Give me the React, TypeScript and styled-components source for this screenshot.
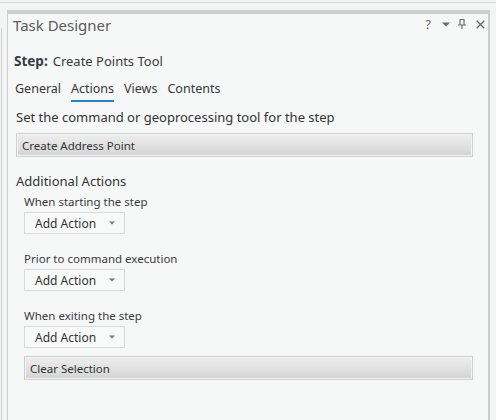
import styled, { createGlobalStyle } from 'styled-components';

const GlobalStyle = createGlobalStyle`
    html, body {
        margin: 0;
        padding: 0;
        background: #f1f2f2;
        font-family: "Noto Sans", "Open Sans", sans-serif;
        color: #3a3a3a;
    }
`

const Page = styled.div`
    width: 496px;
    height: 420px;
    display: flex;
    flex-direction: column;
    overflow: hidden;
    background: #f3f4f4;
`

const DockStrip = styled.div`
    height: 7px;
    margin-top: 2px;
    border-top: 1px solid #d6d6d6;
    flex: none;
`

const DockBody = styled.div`
    flex: 1;
    display: flex;
`

const Gutter = styled.div`
    width: 6px;
    margin-top: 18px;
    box-sizing: border-box;
    border-left: 1px solid #d2d2d2;
    margin-left: 1px;
`

const Panel = styled.div`
    width: 483px;
    box-sizing: border-box;
    border-top: 4px solid #cdcdcd;
    border-left: 1px solid #cfcfcf;
    border-right: 2px solid #cbcbcb;
    background: #f6f8f8;
    display: flex;
    flex-direction: column;
`

const TitleBar = styled.div`
    display: flex;
    align-items: center;
    justify-content: space-between;
    height: 22px;
    padding: 0 3px 0 5px;
`

const Title = styled.div`
    font-size: 15px;
    line-height: 22px;
    color: #5b5b5b;
`

const TitleTools = styled.div`
    display: flex;
    align-items: center;
    gap: 8px;
    color: #6a6a6a;
    margin-top: -2px;

    > svg:first-of-type {
        margin-left: 2px;
    }

    > svg:last-child {
        margin-left: 2px;
    }
`

const HelpGlyph = styled.span`
    font-size: 13px;
    line-height: 14px;
    width: 8px;
    text-align: center;
`

const Content = styled.div`
    padding: 0 15px 0 6px;
    display: flex;
    flex-direction: column;
`

const StepLine = styled.div`
    margin-top: 15px;
    font-size: 13px;
    line-height: 20px;
    color: #3a3a3a;

    b {
        font-size: 13.5px;
        font-weight: 700;
        margin-right: 5px;
    }
`

const Tabs = styled.div`
    display: flex;
    gap: 10px;
    margin-top: 9px;
    padding-left: 1px;
`

const Tab = styled.div<{ $active?: boolean }>`
    font-size: 12.5px;
    line-height: 18px;
    padding-bottom: 2px;
    color: #363636;
    border-bottom: 2px solid ${p => p.$active ? '#1b87cd' : 'transparent'};
`

const SectionTitle = styled.div<{ $top: number }>`
    margin-top: ${p => p.$top}px;
    font-size: 13px;
    line-height: 18px;
    color: #333;
    padding-left: 2px;
`

const WideButton = styled.div<{ $indent?: number }>`
    margin-left: ${p => p.$indent ?? 0}px;
    margin-top: ${p => p.$indent ? 7 : 8}px;
    height: 24px;
    box-sizing: border-box;
    border: 1px solid #cfcfcf;
    box-shadow: inset 0 0 0 1px #f4f4f4;
    background: linear-gradient(to bottom, #eeeeee 0%, #e2e2e2 50%, #d3d3d3 100%);
    display: flex;
    align-items: center;
    padding-left: 5px;
    font-size: 11.5px;
    color: #333;
`

const Group = styled.div`
    padding-left: 10px;
    display: flex;
    flex-direction: column;
`

const GroupLabel = styled.div<{ $top: number }>`
    margin-top: ${p => p.$top}px;
    font-size: 11.5px;
    line-height: 16px;
    color: #3a3a3a;
`

const DropButton = styled.div`
    margin-top: 2px;
    width: 101px;
    height: 22px;
    box-sizing: border-box;
    border: 1px solid #dadada;
    background: #f8f9f9;
    display: flex;
    align-items: center;
    justify-content: space-between;
    padding: 0 9px 0 10px;
    font-size: 12px;
    color: #333;
`

const Caret = () => (
    <svg width="6" height="4" viewBox="0 0 6 4">
        <path d="M0 0.5 L6 0.5 L3 3.5 Z" fill="#777" />
    </svg>
)

const PinIcon = () => (
    <svg width="8" height="10" viewBox="0 0 8 10">
        <path d="M2 0.5 H6 V5.5 M2 0.5 V5.5 M0 6 H8 M4 6 V10" stroke="#6a6a6a" strokeWidth="1.2" fill="none" />
    </svg>
)

const CloseIcon = () => (
    <svg width="9" height="9" viewBox="0 0 9 9">
        <path d="M0.7 0.7 L8.3 8.3 M8.3 0.7 L0.7 8.3" stroke="#6a6a6a" strokeWidth="1.3" />
    </svg>
)

const MenuCaret = () => (
    <svg width="8" height="5" viewBox="0 0 8 5">
        <path d="M0 0.5 H8 L4 4.5 Z" fill="#6a6a6a" />
    </svg>
)

const groups = [
    { label: 'When starting the step', top: 4 },
    { label: 'Prior to command execution', top: 17 },
    { label: 'When exiting the step', top: 17 },
]

export default function App() {
    return (
        <Page>
            <GlobalStyle />
            <DockStrip />
            <DockBody>
                <Gutter />
                <Panel>
                    <TitleBar>
                        <Title>Task Designer</Title>
                        <TitleTools>
                            <HelpGlyph>?</HelpGlyph>
                            <MenuCaret />
                            <PinIcon />
                            <CloseIcon />
                        </TitleTools>
                    </TitleBar>
                    <Content>
                        <StepLine><b>Step:</b>Create Points Tool</StepLine>
                        <Tabs>
                            <Tab>General</Tab>
                            <Tab $active>Actions</Tab>
                            <Tab>Views</Tab>
                            <Tab>Contents</Tab>
                        </Tabs>
                        <SectionTitle $top={6}>Set the command or geoprocessing tool for the step</SectionTitle>
                        <WideButton $indent={2}>Create Address Point</WideButton>
                        <SectionTitle $top={15}>Additional Actions</SectionTitle>
                        <Group>
                            {groups.map(g => (
                                <div key={g.label}>
                                    <GroupLabel $top={g.top}>{g.label}</GroupLabel>
                                    <DropButton>Add Action <Caret /></DropButton>
                                </div>
                            ))}
                            <WideButton>Clear Selection</WideButton>
                        </Group>
                    </Content>
                </Panel>
            </DockBody>
        </Page>
    )
}
